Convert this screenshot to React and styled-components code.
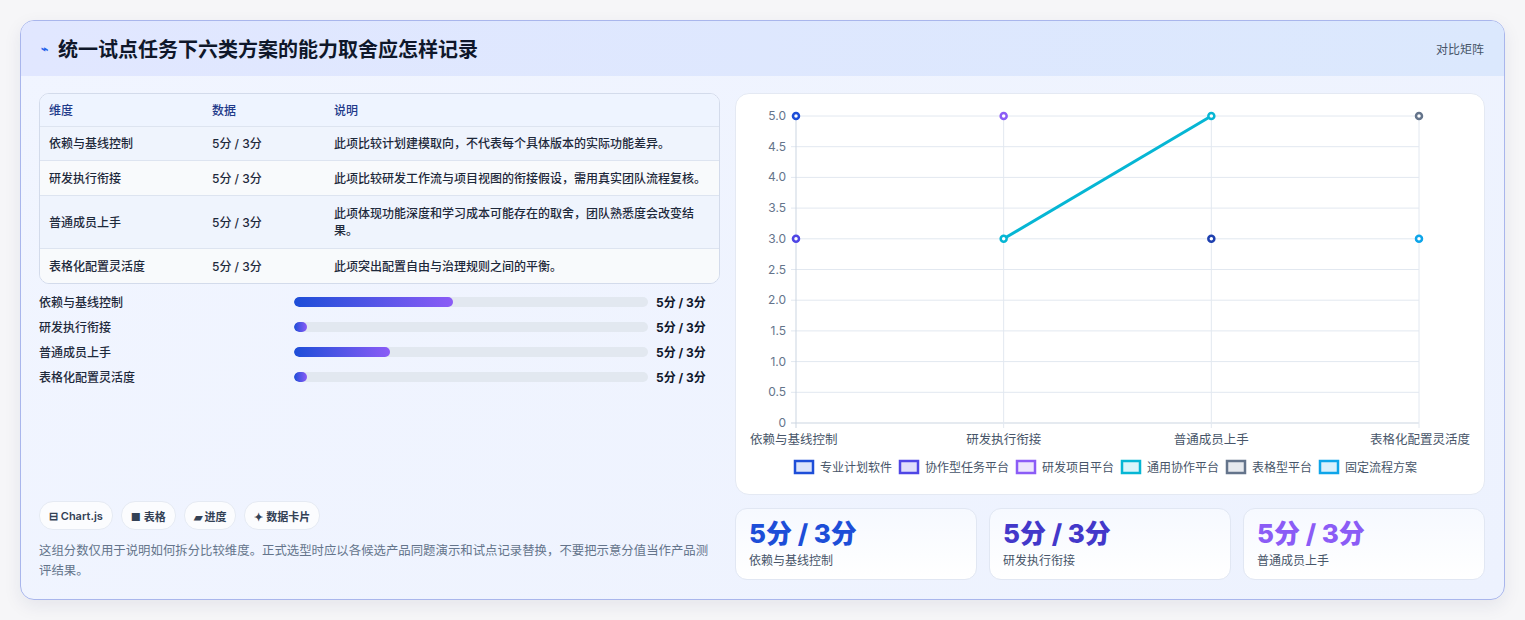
import React from "react";
import styled, { createGlobalStyle } from "styled-components";

const Global = createGlobalStyle`
  body { margin: 0; background: #f6f6f8; font-family: Inter, "Noto Sans CJK SC", sans-serif; }
`;

const Page = styled.div`
  padding: 20px;
  height: 620px;
  box-sizing: border-box;
`;

const Card = styled.div`
  width: 1485px;
  height: 580px;
  box-sizing: border-box;
  border: 1px solid #a9b6ec;
  border-radius: 14px;
  background: linear-gradient(135deg, #f1f5ff, #edf2fe);
  overflow: hidden;
  box-shadow: 0 6px 18px rgba(30, 40, 90, 0.08);
  display: flex;
  flex-direction: column;
`;

const Header = styled.div`
  height: 55px;
  display: flex;
  align-items: center;
  justify-content: space-between;
  padding: 0 20px;
  background: linear-gradient(90deg, #e1e7ff, #dbe8fd);
`;

const Title = styled.h1`
  margin: 0;
  font-size: 20px;
  font-weight: 700;
  color: #0f172a;
  display: flex;
  align-items: center;
  gap: 10px;
`;

const HeaderLink = styled.span`
  font-size: 12px;
  color: #475569;
`;

const Body = styled.div`
  flex: 1;
  display: grid;
  grid-template-columns: 681px 750px;
  gap: 15px;
  padding: 17px 18px 18px 18px;
`;

const Left = styled.div`
  display: flex;
  flex-direction: column;
`;

const Table = styled.div`
  border: 1px solid #d3dbeb;
  border-radius: 10px;
  overflow: hidden;
  background: #f8faff;
`;

const Row = styled.div`
  display: grid;
  grid-template-columns: 163px 122px 1fr;
  padding: 0 9px;
  min-height: ${(p) => p.$h || 34}px;
  align-items: center;
  font-size: 12px;
  font-weight: 500;
  line-height: 17px;
  color: ${(p) => (p.$head ? "#1e3a8a" : "#1e293b")};
  background: ${(p) => (p.$head ? "#eef4ff" : p.$alt ? "#f8fafc" : "#eff4fd")};
  border-top: ${(p) => (p.$head ? "none" : "1px solid #dde4f0")};
  box-sizing: border-box;
  & > span:last-child { padding-right: 4px; }
`;

const Bars = styled.div`
  margin-top: 8px;
  display: flex;
  flex-direction: column;
  gap: 6px;
`;

const BarRow = styled.div`
  display: grid;
  grid-template-columns: 255px 362px 64px;
  align-items: center;
  height: 19px;
  font-size: 12px;
  font-weight: 500;
  color: #1e293b;
`;

const Track = styled.div`
  height: 10px;
  border-radius: 5px;
  background: #e2e8f0;
  margin-right: 8px;
  overflow: hidden;
`;

const Fill = styled.div`
  height: 100%;
  border-radius: 5px;
  background: linear-gradient(90deg, #1d4ed8, #8b5cf6);
`;

const BarValue = styled.span`
  font-weight: 700;
  color: #0f172a;
`;

const Bottom = styled.div`
  margin-top: auto;
`;

const Chips = styled.div`
  display: flex;
  gap: 8px;
`;

const Chip = styled.span`
  height: 27px;
  padding: 0 9px;
  display: inline-flex;
  align-items: center;
  gap: 3px;
  border-radius: 14px;
  background: #fbfcfe;
  border: 1px solid #e5eaf3;
  font-size: 11px;
  font-weight: 600;
  color: #334155;
`;

const Note = styled.p`
  margin: 11px 0 0;
  font-size: 12.4px;
  line-height: 20px;
  color: #64748b;
`;

const Right = styled.div`
  display: flex;
  flex-direction: column;
  gap: 13px;
`;

const ChartPanel = styled.div`
  height: 402px;
  background: #fff;
  border: 1px solid #e4e9f3;
  border-radius: 14px;
  box-sizing: border-box;
`;

const Stats = styled.div`
  display: grid;
  grid-template-columns: repeat(3, 1fr);
  gap: 12px;
`;

const Stat = styled.div`
  height: 72px;
  box-sizing: border-box;
  padding: 10px 13px;
  border-radius: 12px;
  border: 1px solid #e1e7f3;
  background: linear-gradient(180deg, #f6f9ff, #ffffff);
`;

const StatValue = styled.div`
  font-size: 26px;
  font-weight: 800;
  line-height: 30px;
  color: ${(p) => p.$c};
`;

const StatLabel = styled.div`
  margin-top: 2px;
  font-size: 12px;
  color: #475569;
`;

const rows = [
  ["依赖与基线控制", "5分 / 3分", "此项比较计划建模取向，不代表每个具体版本的实际功能差异。", 34],
  ["研发执行衔接", "5分 / 3分", "此项比较研发工作流与项目视图的衔接假设，需用真实团队流程复核。", 35],
  ["普通成员上手", "5分 / 3分", "此项体现功能深度和学习成本可能存在的取舍，团队熟悉度会改变结果。", 53],
  ["表格化配置灵活度", "5分 / 3分", "此项突出配置自由与治理规则之间的平衡。", 35],
];

const bars = [
  ["依赖与基线控制", 45],
  ["研发执行衔接", 3.7],
  ["普通成员上手", 27],
  ["表格化配置灵活度", 3.7],
];

const L = 60, R = 683, T = 22, B = 329;
const xs = [L, L + (R - L) / 3, L + (2 * (R - L)) / 3, R];
const yv = (v) => B - (v / 5) * (B - T);

const points = [
  [0, 5, "#1d4ed8"], [0, 3, "#4f46e5"], [1, 5, "#8b5cf6"], [1, 3, "#06b6d4"],
  [2, 5, "#06b6d4"], [2, 3, "#1e40af"], [3, 5, "#64748b"], [3, 3, "#0ea5e9"],
];

const legend = [
  ["专业计划软件", "#1d4ed8", "#dbe4fb"],
  ["协作型任务平台", "#4f46e5", "#e0defb"],
  ["研发项目平台", "#8b5cf6", "#ede6fd"],
  ["通用协作平台", "#06b6d4", "#d9f5fa"],
  ["表格型平台", "#64748b", "#e6e9ee"],
  ["固定流程方案", "#0ea5e9", "#d9f0fc"],
];

function Chart() {
  const ticks = [0, 0.5, 1, 1.5, 2, 2.5, 3, 3.5, 4, 4.5, 5];
  const cats = ["依赖与基线控制", "研发执行衔接", "普通成员上手", "表格化配置灵活度"];
  let lx = 0;
  const legendItems = legend.map(([t, c, f]) => {
    const x = lx;
    lx += 33 + t.length * 12;
    return { t, c, f, x };
  });
  const shift = (748 - lx) / 2;
  return (
    <svg width="748" height="400" style={{ fontFamily: "Inter, 'Noto Sans CJK SC', sans-serif" }}>
      {ticks.map((v) => (
        <g key={v}>
          <line x1={L - 5} x2={R} y1={yv(v)} y2={yv(v)} stroke={v === 0 ? "#cbd5e1" : "#e2e8f0"} />
          <text x={L - 10} y={yv(v) + 4} textAnchor="end" fontSize="12" fill="#64748b">
            {v === 0 ? "0" : v.toFixed(1)}
          </text>
        </g>
      ))}
      {xs.map((x, i) => (
        <line key={i} x1={x} x2={x} y1={T} y2={B + 5} stroke={i === 0 ? "#cbd5e1" : "#e2e8f0"} />
      ))}
      {cats.map((c, i) => (
        <text key={c} x={i === 3 ? 734 : i === 0 ? 14 : xs[i]} y={B + 21} textAnchor={i === 3 ? "end" : i === 0 ? "start" : "middle"} fontSize="12.5" fill="#475569">
          {c}
        </text>
      ))}
      <line x1={xs[1]} y1={yv(3)} x2={xs[2]} y2={yv(5)} stroke="#06b6d4" strokeWidth="3" />
      {points.map(([i, v, c], k) => (
        <circle key={k} cx={xs[i]} cy={yv(v)} r="3" fill="#fff" stroke={c} strokeWidth="2.5" />
      ))}
      {legendItems.map(({ t, c, f, x }) => (
        <g key={t} transform={`translate(${x + shift},0)`}>
          <rect x="0" y="367" width="18" height="12" fill={f} stroke={c} strokeWidth="2.5" />
          <text x="25" y="378" fontSize="12" fill="#475569">{t}</text>
        </g>
      ))}
    </svg>
  );
}

export default function App() {
  return (
    <Page>
      <Global />
      <Card>
        <Header>
          <Title>
            <span style={{ color: "#2563eb", fontSize: 12 }}>⌁</span>
            统一试点任务下六类方案的能力取舍应怎样记录
          </Title>
          <HeaderLink>对比矩阵</HeaderLink>
        </Header>
        <Body>
          <Left>
            <Table>
              <Row $head $h={32}>
                <span>维度</span>
                <span>数据</span>
                <span>说明</span>
              </Row>
              {rows.map(([a, b, c, h], i) => (
                <Row key={a} $h={h} $alt={i % 2 === 1}>
                  <span>{a}</span>
                  <span>{b}</span>
                  <span>{c}</span>
                </Row>
              ))}
            </Table>
            <Bars>
              {bars.map(([l, w]) => (
                <BarRow key={l}>
                  <span>{l}</span>
                  <Track>
                    <Fill style={{ width: `${w}%` }} />
                  </Track>
                  <BarValue>5分 / 3分</BarValue>
                </BarRow>
              ))}
            </Bars>
            <Bottom>
              <Chips>
                <Chip>⊟ Chart.js</Chip>
                <Chip>■ 表格</Chip>
                <Chip>▰ 进度</Chip>
                <Chip>✦ 数据卡片</Chip>
              </Chips>
              <Note>
                这组分数仅用于说明如何拆分比较维度。正式选型时应以各候选产品同题演示和试点记录替换，不要把示意分值当作产品测评结果。
              </Note>
            </Bottom>
          </Left>
          <Right>
            <ChartPanel>
              <Chart />
            </ChartPanel>
            <Stats>
              <Stat>
                <StatValue $c="#1d4ed8">5分 / 3分</StatValue>
                <StatLabel>依赖与基线控制</StatLabel>
              </Stat>
              <Stat>
                <StatValue $c="#4338ca">5分 / 3分</StatValue>
                <StatLabel>研发执行衔接</StatLabel>
              </Stat>
              <Stat>
                <StatValue $c="#8b5cf6">5分 / 3分</StatValue>
                <StatLabel>普通成员上手</StatLabel>
              </Stat>
            </Stats>
          </Right>
        </Body>
      </Card>
    </Page>
  );
}
